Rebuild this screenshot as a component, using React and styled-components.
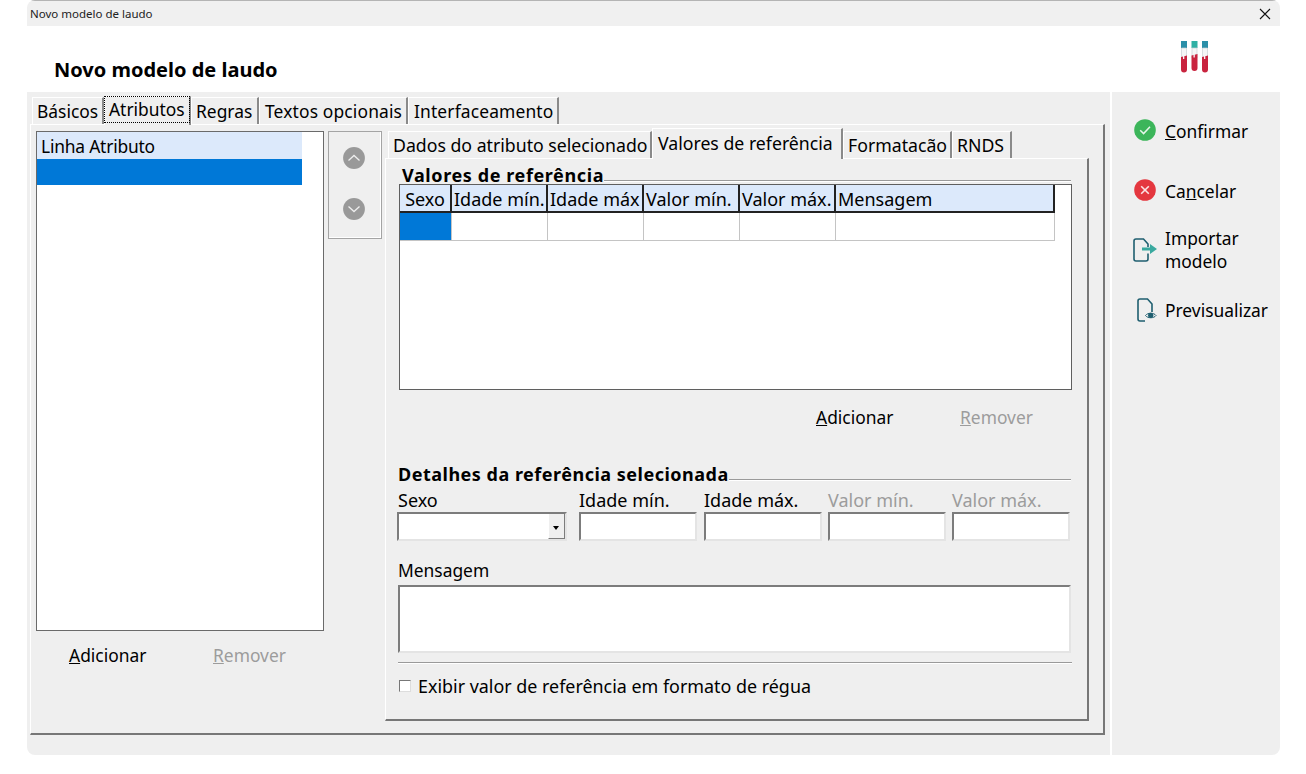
import React from 'react'
import styled, { createGlobalStyle } from 'styled-components'

const FONT = `"Noto Sans", "Open Sans", "DejaVu Sans", sans-serif`

const Global = createGlobalStyle`
  html, body { margin: 0; padding: 0; background: #fff; }
  body { font-family: ${FONT}; font-size: 17.4px; color: #000; }
`

const OUTER_TABS = [
  { label: 'Básicos', width: 72 },
  { label: 'Atributos', width: 87, active: true },
  { label: 'Regras', width: 68 },
  { label: 'Textos opcionais', width: 149, wide: true },
  { label: 'Interfaceamento', width: 151, wide: true },
]

const INNER_TABS = [
  { label: 'Dados do atributo selecionado', width: 264 },
  { label: 'Valores de referência', width: 191, active: true },
  { label: 'Formatacão', width: 109 },
  { label: 'RNDS', width: 60 },
]

const GRID_COLS = [
  { label: 'Sexo', width: 52, center: true },
  { label: 'Idade mín.', width: 96 },
  { label: 'Idade máx', width: 96 },
  { label: 'Valor mín.', width: 96 },
  { label: 'Valor máx.', width: 96 },
  { label: 'Mensagem', width: 219 },
]

const FIELDS = [
  { label: 'Idade mín.' },
  { label: 'Idade máx.', shift: true },
  { label: 'Valor mín.', disabled: true },
  { label: 'Valor máx.', disabled: true },
]

const App = () => (
  <Window>
    <Global />
    <TitleBar>
      <span>Novo modelo de laudo</span>
      <svg width="12" height="12" viewBox="0 0 12 12">
        <path d="M1 1l10 10M11 1L1 11" stroke="#111" strokeWidth="1.1" fill="none" />
      </svg>
    </TitleBar>
    <Header>
      <h1>Novo modelo de laudo</h1>
      <TubesIcon />
    </Header>
    <Body>
      <MainPane>
        <TabStrip>
          {OUTER_TABS.map((t) => (
            <Tab key={t.label} $w={t.width} $active={t.active} $wide={t.wide}>{t.label}</Tab>
          ))}
        </TabStrip>
        <OuterPage>
          <LeftColumn>
            <ListBox>
              <ListRow>Linha Atributo</ListRow>
              <ListRow $selected />
            </ListBox>
            <LinkRow $left>
              <LinkButton><u>A</u>dicionar</LinkButton>
              <LinkButton $disabled><u>R</u>emover</LinkButton>
            </LinkRow>
          </LeftColumn>
          <ArrowPanel>
            <ArrowIcon d="M-5.5 2.5L0 -2.5L5.5 2.5" />
            <ArrowIcon d="M-5.5 -2.5L0 2.5L5.5 -2.5" />
          </ArrowPanel>
          <RightColumn>
            <InnerTabStrip>
              {INNER_TABS.map((t) => (
                <InnerTab key={t.label} $w={t.width} $active={t.active}>{t.label}</InnerTab>
              ))}
            </InnerTabStrip>
            <InnerPage>
              <GroupTitle>
                <strong>Valores de referência</strong>
              </GroupTitle>
              <Grid>
                <GridRow>
                  {GRID_COLS.map((c) => (
                    <HeadCell key={c.label} $w={c.width} $center={c.center}>{c.label}</HeadCell>
                  ))}
                </GridRow>
                <GridRow>
                  {GRID_COLS.map((c, i) => (
                    <DataCell key={c.label} $w={c.width} $selected={i === 0} />
                  ))}
                </GridRow>
              </Grid>
              <LinkRow>
                <LinkButton><u>A</u>dicionar</LinkButton>
                <LinkButton $disabled><u>R</u>emover</LinkButton>
              </LinkRow>
              <GroupTitle $details>
                <strong>Detalhes da referência selecionada</strong>
              </GroupTitle>
              <FieldRow>
                <Field>
                  <FieldLabel>Sexo</FieldLabel>
                  <Combo>
                    <ComboButton />
                  </Combo>
                </Field>
                {FIELDS.map((f) => (
                  <Field key={f.label} $shift={f.shift}>
                    <FieldLabel $disabled={f.disabled}>{f.label}</FieldLabel>
                    <Input />
                  </Field>
                ))}
              </FieldRow>
              <MessageLabel>Mensagem</MessageLabel>
              <TextArea />
              <Separator />
              <CheckRow>
                <CheckBox />
                <span>Exibir valor de referência em formato de régua</span>
              </CheckRow>
            </InnerPage>
          </RightColumn>
        </OuterPage>
      </MainPane>
      <SidePane>
        <Action $raised>
          <svg width="22" height="22" viewBox="0 0 22 22">
            <circle cx="11" cy="11" r="10.8" fill="#3cb55a" />
            <path d="M6.2 11.2l3.4 3.4 6.4-6.8" fill="none" stroke="#e6f6ea" strokeWidth="1.5" />
          </svg>
          <span>
            <u>C</u>onfirmar
          </span>
        </Action>
        <Action $top={37} $raised>
          <svg width="22" height="22" viewBox="0 0 22 22">
            <circle cx="11" cy="11" r="10.8" fill="#e4373f" />
            <path d="M7.2 7.2l7.6 7.6M14.8 7.2l-7.6 7.6" fill="none" stroke="#fbe3e4" strokeWidth="1.6" />
          </svg>
          <span>
            Ca<u>n</u>celar
          </span>
        </Action>
        <Action $top={24} $tall>
          <svg width="24" height="24" viewBox="0 0 24 24">
            <path d="M3 1h7.5L15 6v3M15 15.5V21a2 2 0 0 1-2 2H3a2 2 0 0 1-2-2V3a2 2 0 0 1 2-2" fill="none" stroke="#1f5f70" strokeWidth="1.6" />
            <path d="M9 9.5h8V6l7 5-7 5v-3.5H9z" fill="#3aa99f" />
          </svg>
          <span>
            Importar
            <br />
            modelo
          </span>
        </Action>
        <Action $top={26} $inset>
          <svg width="20" height="24" viewBox="0 0 20 24">
            <path d="M8 23H3a2 2 0 0 1-2-2V3a2 2 0 0 1 2-2h7.5L15 6v8" fill="none" stroke="#1f5f70" strokeWidth="1.6" />
            <path d="M8.5 17.5c2-3 8.5-3 10.5 0-2 3-8.5 3-10.5 0z" fill="none" stroke="#1f5f70" strokeWidth="1" />
            <circle cx="13.7" cy="17.3" r="2.6" fill="#1f5f70" />
          </svg>
          <span>Previsualizar</span>
        </Action>
      </SidePane>
    </Body>
  </Window>
)

export default App

const TubesIcon = () => (
  <TubesSvg width="30" height="33" viewBox="0 0 30 33">
    {[
      { x: 1, cap: '#2b8fa8', top: 16 },
      { x: 11.5, cap: '#2fb0a4', top: 14.5 },
      { x: 22, cap: '#2b8fa8', top: 16 },
    ].map((t) => (
      <g key={t.x}>
        <rect x={t.x} y="1" width="6" height="7" fill={t.cap} />
        <path d={`M${t.x + 0.5} 8h5v10h-5z`} fill="#f4f6f6" stroke="#c9d0d2" strokeWidth="0.7" />
        <path d={`M${t.x} ${t.top + 1}l6 -1.5v14a3 3 0 0 1-6 0z`} fill="#c9243f" />
        <rect x={t.x + 2} y={t.top - 3} width="1.3" height="6" fill="#f6f6f6" />
      </g>
    ))}
  </TubesSvg>
)

const ArrowIcon = ({ d }) => (
  <svg width="22" height="22" viewBox="-11 -11 22 22">
    <circle r="10.9" fill="#999" />
    <path d={d} fill="none" stroke="#eee" strokeWidth="1.3" />
  </svg>
)

const Window = styled.div`
  width: 1253px;
  height: 755px;
  margin-left: 27px;
  display: flex;
  flex-direction: column;
  overflow: hidden;
  border-radius: 8px;
`

const TitleBar = styled.div`
  height: 25px;
  flex: none;
  background: #f0f0f0;
  border-top: 1px solid #b4b4b4;
  display: flex;
  align-items: center;
  justify-content: space-between;
  padding: 0 9px 0 3px;
  font-size: 11.5px;
  color: #222;
`

const Header = styled.div`
  height: 66px;
  flex: none;
  background: #fff;
  position: relative;
  padding-left: 27px;

  h1 {
    margin: 0;
    padding-top: 30px;
    font-size: 20px;
    line-height: 28px;
    font-weight: 700;
  }
`

const TubesSvg = styled.svg`
  position: absolute;
  left: 1153px;
  top: 14px;
`

const Body = styled.div`
  flex: 1;
  display: flex;
  gap: 2px;
  min-height: 0;
`

const MainPane = styled.div`
  width: 1083px;
  background: #efefef;
  padding: 4px 5px 20px 3px;
  box-sizing: border-box;
  display: flex;
  flex-direction: column;
`

const TabStrip = styled.div`
  display: flex;
  height: 28px;
  padding-left: 2px;
  flex: none;
  align-items: flex-end;
`

const Tab = styled.div`
  width: ${(p) => p.$w}px;
  height: ${(p) => (p.$active ? 29 : 27)}px;
  line-height: ${(p) => (p.$active ? 24 : 26)}px;
  padding-left: ${(p) => (p.$wide ? 5 : 4)}px;
  letter-spacing: ${(p) => (p.$wide ? 0.15 : 0)}px;
  box-sizing: border-box;
  white-space: nowrap;
  background: #efefef;
  border-left: 1px solid #fff;
  border-top: 1px solid #fff;
  border-right: 2px solid #8a8a8a;
  ${(p) => p.$active && `
    margin-bottom: -1px;
    z-index: 1;
    position: relative;
    &::after {
      content: '';
      position: absolute;
      inset: 0 0 3px 0;
      outline: 1px dotted #000;
    }
  `}
`

const OuterPage = styled.div`
  flex: 1;
  display: flex;
  box-sizing: border-box;
  padding: 6px 0 0 5px;
  border-left: 1px solid #fff;
  border-top: 1px solid #fff;
  border-right: 2px solid #777;
  border-bottom: 2px solid #777;
  min-height: 0;
`

const LeftColumn = styled.div`
  width: 288px;
  flex: none;
`

const ListBox = styled.div`
  height: 500px;
  box-sizing: border-box;
  background: #fff;
  border: 1px solid #6a6a6a;
  padding-right: 21px;
`

const ListRow = styled.div`
  height: 27px;
  line-height: 29px;
  padding-left: 4px;
  letter-spacing: -0.2px;
  background: ${(p) => (p.$selected ? '#0078d7' : '#dce9fb')};
  &:nth-child(2) { height: 26px; }
`

const LinkRow = styled.div`
  display: flex;
  height: ${(p) => (p.$left ? 48 : 54)}px;
  align-items: center;
  gap: 67px;
  padding-left: ${(p) => (p.$left ? 33 : 417)}px;
`

const LinkButton = styled.div`
  width: 77px;
  white-space: nowrap;
  color: ${(p) => (p.$disabled ? '#9c9c9c' : '#000')};
`

const ArrowPanel = styled.div`
  width: 54px;
  height: 108px;
  box-sizing: border-box;
  margin-left: 4px;
  border: 1px solid #a4a4a4;
  box-shadow: inset -1px -1px 0 #fff;
  display: flex;
  flex-direction: column;
  align-items: center;
  gap: 29px;
  padding: 15px 2px 0 0;
  flex: none;
`

const RightColumn = styled.div`
  margin: -3px 0 0 3px;
  width: 704px;
  flex: none;
  display: flex;
  flex-direction: column;
`

const InnerTabStrip = styled.div`
  display: flex;
  height: 30px;
  padding-left: 3px;
  align-items: flex-end;
  flex: none;
  font-size: 17.7px;
`

const InnerTab = styled.div`
  width: ${(p) => p.$w}px;
  height: ${(p) => (p.$active ? 31 : 27)}px;
  line-height: ${(p) => (p.$active ? 28 : 26)}px;
  padding-left: ${(p) => (p.$active ? 5 : 4)}px;
  box-sizing: border-box;
  white-space: nowrap;
  background: #efefef;
  border-left: 1px solid #fff;
  border-top: 1px solid #fff;
  border-right: 2px solid #8a8a8a;
  ${(p) => p.$active && 'margin-bottom: -1px; z-index: 1;'}
`

const InnerPage = styled.div`
  height: 563px;
  box-sizing: border-box;
  padding: 4px 16px 0 13px;
  border-left: 1px solid #fff;
  border-top: 1px solid #fff;
  border-right: 2px solid #777;
  border-bottom: 2px solid #777;
`

const GroupTitle = styled.div`
  display: flex;
  align-items: flex-start;
  height: 21px;
  margin-left: ${(p) => (p.$details ? -1 : 3)}px;
  margin-top: ${(p) => (p.$details ? 18 : 0)}px;

  strong {
    font-size: 18px;
    line-height: 24px;
    letter-spacing: ${(p) => (p.$details ? 0.5 : 0.6)}px;
    white-space: nowrap;
  }

  &::after {
    content: '';
    flex: 1;
    height: 1px;
    background: #9a9a9a;
    margin-top: 17px;
    box-shadow: 0 1px 0 #fff;
  }
`

const Grid = styled.div`
  height: 206px;
  box-sizing: border-box;
  background: #fff;
  border: 1px solid #5f5f5f;
  margin-right: -1px;
`

const GridRow = styled.div`
  display: flex;
`

const HeadCell = styled.div`
  width: ${(p) => p.$w}px;
  height: 28px;
  line-height: 29px;
  box-sizing: border-box;
  background: #dce9fb;
  border-right: 2px solid #222;
  border-bottom: 2px solid #222;
  padding-left: ${(p) => (p.$center ? 0 : 2)}px;
  font-size: 18px;
  text-align: ${(p) => (p.$center ? 'center' : 'left')};
  white-space: nowrap;
  overflow: hidden;
`

const DataCell = styled.div`
  width: ${(p) => p.$w}px;
  height: 28px;
  box-sizing: border-box;
  background: ${(p) => (p.$selected ? '#0078d7' : '#fff')};
  border-right: 1px solid #c4c4c4;
  border-bottom: 1px solid #c4c4c4;
`

const FieldRow = styled.div`
  display: flex;
  gap: 6px;
  margin-top: 6px;
  margin-left: -2px;
`

const Field = styled.div`
  display: flex;
  flex-direction: column;
  margin-left: ${(p) => (p.$shift ? 1 : 0)}px;
  &:first-child { margin-right: 6px; }
`

const FieldLabel = styled.div`
  height: 23px;
  line-height: 22px;
  font-size: 18px;
  color: ${(p) => (p.$disabled ? '#9c9c9c' : '#000')};
  ${Field}:first-child & { padding-left: 1px; }
`

const MessageLabel = styled.div`
  margin: 18px 0 0 -1px;
  height: 26px;
  line-height: 22px;
`

const Sunken = styled.div`
  height: 29px;
  box-sizing: border-box;
  background: #fff;
  border-top: 2px solid #7c7c7c;
  border-left: 2px solid #7c7c7c;
  border-bottom: 2px solid #e4e4e4;
  border-right: 2px solid #e4e4e4;
`

const Input = styled(Sunken)`
  width: 118px;
`

const Combo = styled(Sunken)`
  width: 170px;
  display: flex;
  justify-content: flex-end;
`

const ComboButton = styled.div`
  width: 17px;
  background: #efefef;
  border-left: 1px solid #fff;
  border-right: 1px solid #7c7c7c;
  border-bottom: 1px solid #7c7c7c;
  box-sizing: border-box;
  position: relative;

  &::after {
    content: '';
    position: absolute;
    left: 4px;
    top: 12px;
    border-left: 3.5px solid transparent;
    border-right: 3.5px solid transparent;
    border-top: 4px solid #000;
  }
`

const TextArea = styled(Sunken)`
  height: 68px;
  width: 673px;
  margin-left: -1px;
`

const Separator = styled.div`
  height: 1px;
  margin: 9px 0 0 -1px;
  width: 674px;
  background: #9a9a9a;
  box-shadow: 0 1px 0 #fff;
`

const CheckRow = styled.div`
  display: flex;
  align-items: center;
  gap: 7px;
  margin-top: 11px;
  height: 24px;
  font-size: 17.9px;
`

const CheckBox = styled.div`
  width: 12px;
  height: 12px;
  box-sizing: border-box;
  background: #fff;
  border-top: 1px solid #777;
  border-left: 1px solid #777;
  border-bottom: 1px solid #ddd;
  border-right: 1px solid #ddd;
  flex: none;
`

const SidePane = styled.div`
  flex: 1;
  background: #efefef;
  padding: 28px 0 0 22px;
  display: flex;
  flex-direction: column;
  align-items: flex-start;
`

const Action = styled.div`
  display: flex;
  align-items: center;
  margin-top: ${(p) => p.$top || 0}px;
  line-height: 23px;

  svg {
    flex: none;
    margin-left: ${(p) => (p.$inset ? 3 : p.$tall ? -1 : 0)}px;
    margin-top: ${(p) => (p.$raised ? -4 : p.$inset ? -2 : 0)}px;
  }

  span {
    margin-left: ${(p) => (p.$tall || p.$inset ? 8 : 9)}px;
    white-space: nowrap;
  }
`
